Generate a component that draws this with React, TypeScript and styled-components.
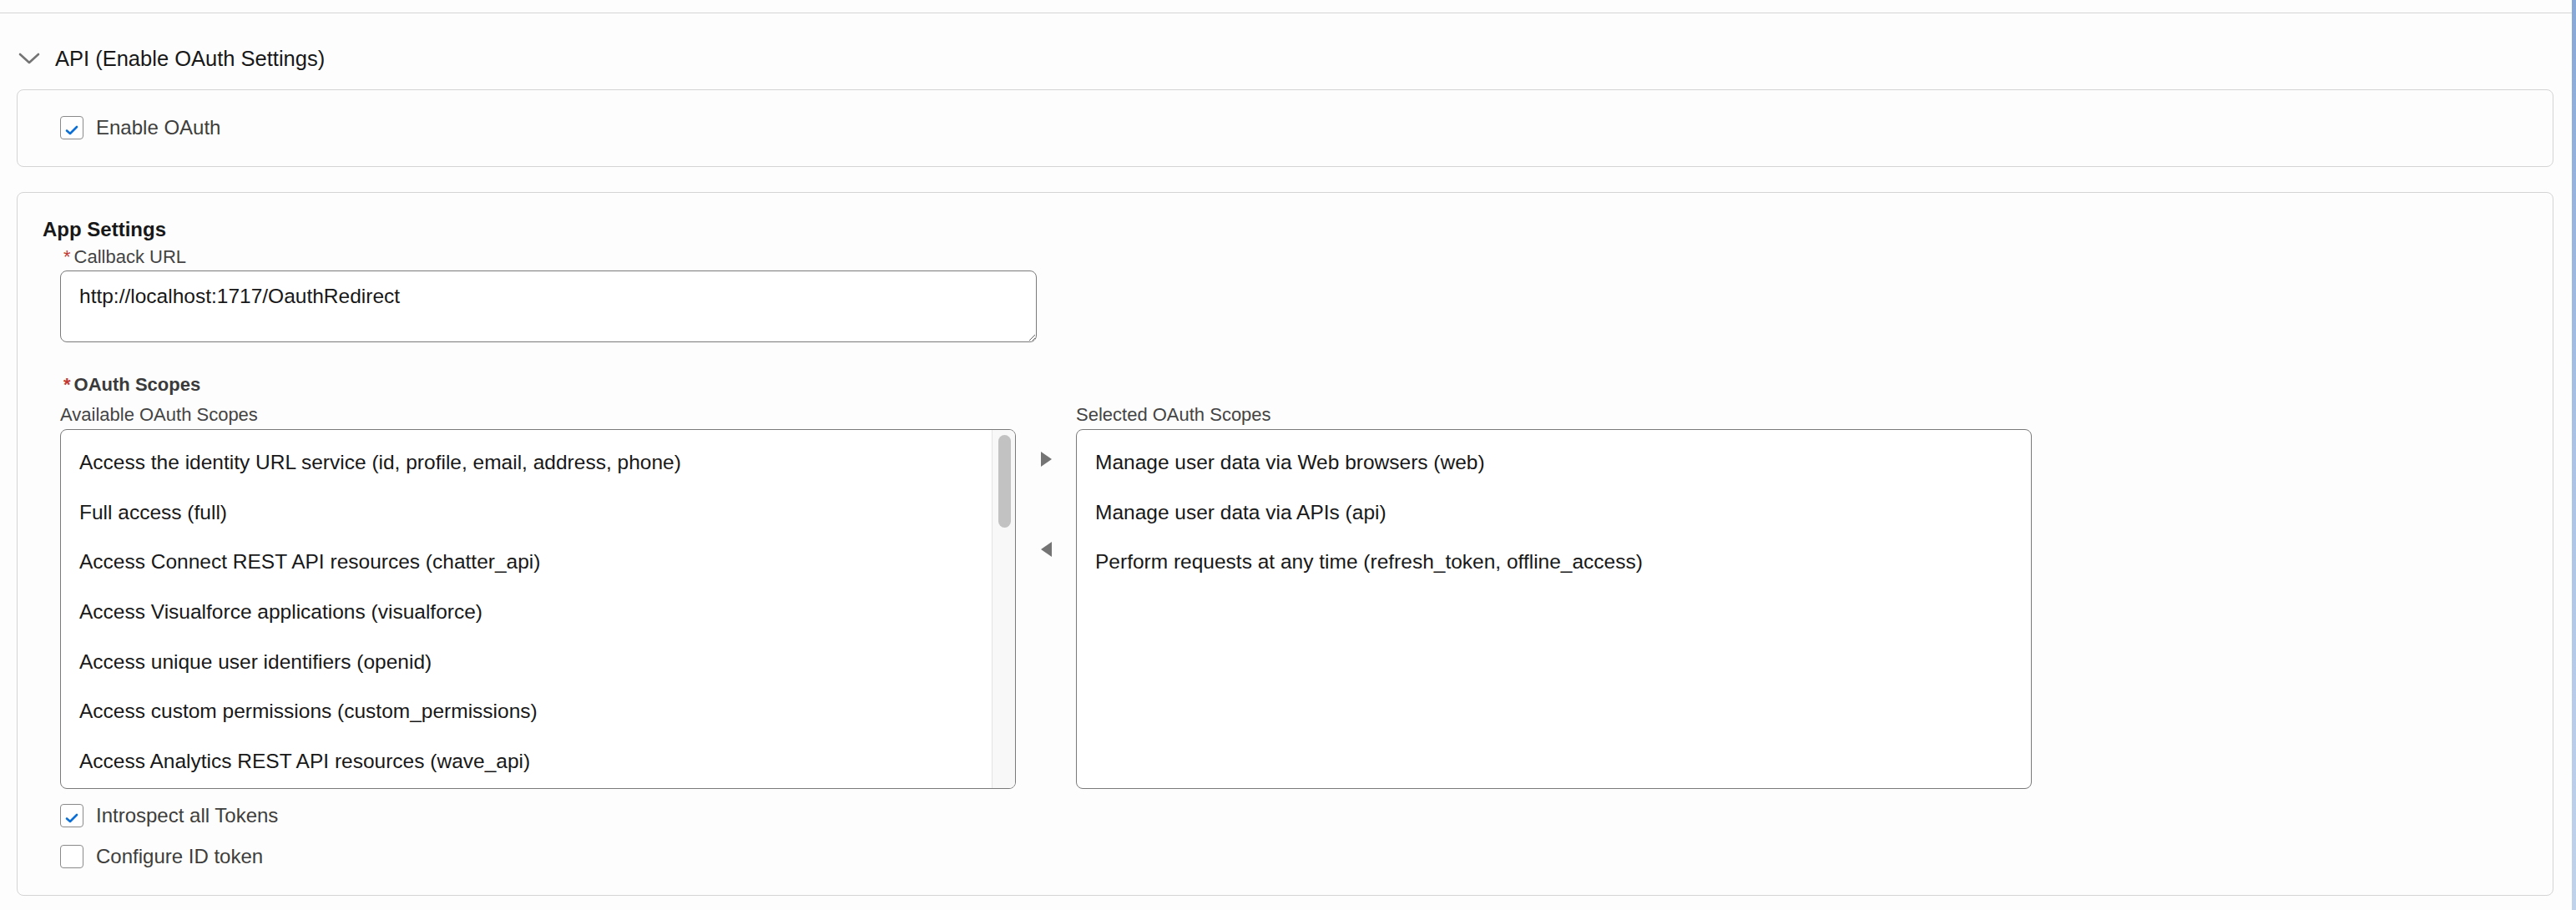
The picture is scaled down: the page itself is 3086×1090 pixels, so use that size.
import { styled, createGlobalStyle } from 'styled-components'

const GlobalStyle = createGlobalStyle`
    body {
        margin: 0;
        background-color: #fdfdfd;
        font-family: 'Liberation Sans', Arial, sans-serif;
        color: #181818;
    }
`

const Page = styled.div`
    display: flex;
    min-height: 100vh;
`

const Main = styled.div`
    flex: 1;
    min-width: 0;
`

const BlueEdge = styled.div`
    width: 5px;
    background: linear-gradient(180deg, #86a8d8 0%, #aac3e6 50%, #c0d3ec 100%);
`

const TopRule = styled.div`
    height: 15px;
    border-bottom: 1px solid #d5d5d5;
`

const SectionHeader = styled.div`
    display: flex;
    align-items: center;
    gap: 18px;
    height: 28px;
    margin-top: 40px;
    padding-left: 22px;
`

const SectionTitle = styled.h2`
    margin: 0;
    font-size: 25.5px;
    font-weight: 400;
    line-height: 28px;
    color: #181818;
`

const Card = styled.div<{ $top: number; $padding: string }>`
    margin: ${(p) => p.$top}px 22px 0 20px;
    padding: ${(p) => p.$padding};
    border: 1px solid #d4d4d4;
    border-radius: 8px;
    background-color: #fdfdfd;
`

const CardTitle = styled.h3`
    margin: 0;
    font-size: 24px;
    font-weight: 700;
    line-height: 30px;
    color: #181818;
`

const Fields = styled.div`
    padding-left: 21px;
`

const Label = styled.div<{ $bold?: boolean; $top: number }>`
    margin-top: ${(p) => p.$top}px;
    font-size: 22px;
    line-height: 26px;
    font-weight: ${(p) => (p.$bold ? 700 : 400)};
    color: ${(p) => (p.$bold ? '#3a3a3a' : '#444444')};
    white-space: nowrap;
`

const Required = styled.abbr`
    text-decoration: none;
    color: #c23934;
    margin: 0 4px 0 4px;
`

const UrlInput = styled.textarea`
    display: block;
    box-sizing: border-box;
    width: 1170px;
    height: 86px;
    margin-top: 3px;
    padding: 15px 22px;
    border: 1px solid #7a7a7a;
    border-radius: 8px;
    background-color: #ffffff;
    font-family: 'Liberation Sans', Arial, sans-serif;
    font-size: 24.5px;
    line-height: 30px;
    color: #181818;
    resize: vertical;
    outline: none;
`

const DualList = styled.div`
    display: flex;
    align-items: flex-start;
    margin-top: 10px;
`

const ListColumn = styled.div`
    width: 1145px;
`

const ListBox = styled.div`
    display: flex;
    box-sizing: border-box;
    height: 431px;
    margin-top: 4px;
    border: 1px solid #7a7a7a;
    border-radius: 8px;
    background-color: #ffffff;
    overflow: hidden;
`

const Options = styled.ul`
    flex: 1;
    margin: 0;
    padding: 9px 0 0 0;
    list-style: none;
`

const Option = styled.li`
    height: 59.7px;
    padding-left: 22px;
    font-size: 24.5px;
    line-height: 59.7px;
    color: #181818;
    white-space: nowrap;
`

const ScrollTrack = styled.div`
    width: 28px;
    box-sizing: border-box;
    padding: 6px 6px 0 7px;
    border-left: 1px solid #e4e4e4;
    background-color: #f8f8f8;
`

const ScrollThumb = styled.div`
    width: 15px;
    height: 111px;
    border-radius: 8px;
    background-color: #c2c2c2;
`

const ArrowColumn = styled.div`
    display: flex;
    flex-direction: column;
    align-items: center;
    gap: 90px;
    width: 72px;
    padding-top: 57px;
`

const ArrowButton = styled.button`
    display: block;
    width: 13px;
    height: 18px;
    padding: 0;
    border: none;
    background: none;
    cursor: pointer;

    svg {
        display: block;
    }
`

const CheckList = styled.div<{ $top: number }>`
    display: flex;
    flex-direction: column;
    gap: 21px;
    margin-top: ${(p) => p.$top}px;
`

const CheckRow = styled.label`
    display: flex;
    align-items: center;
    gap: 15px;
    height: 28px;
    font-size: 24px;
    color: #3e3e3c;
    cursor: pointer;
`

const CheckBox = styled.span`
    display: flex;
    align-items: center;
    justify-content: center;
    box-sizing: border-box;
    width: 28px;
    height: 28px;
    border: 1px solid #8a8a8a;
    border-radius: 4px;
    background-color: #ffffff;
`

const ChevronDown = () => (
    <svg width="26" height="14" viewBox="0 0 26 14" fill="none">
        <path d="M2 2 L13 12 L24 2" stroke="#747474" strokeWidth="2.6" strokeLinecap="round" strokeLinejoin="round" />
    </svg>
)

const CheckMark = () => (
    <svg width="16" height="12" viewBox="0 0 16 12" fill="none" style={{ marginTop: 5 }}>
        <path d="M2 6.5 L6 10 L14 2" stroke="#0b6fd6" strokeWidth="2.6" strokeLinecap="round" strokeLinejoin="round" />
    </svg>
)

const TriangleRight = () => (
    <svg width="13" height="18" viewBox="0 0 13 18">
        <polygon points="0,0 13,9 0,18" fill="#747474" />
    </svg>
)

const TriangleLeft = () => (
    <svg width="13" height="18" viewBox="0 0 13 18">
        <polygon points="13,0 0,9 13,18" fill="#747474" />
    </svg>
)

const Checkbox = ({ checked, label }: { checked: boolean; label: string }) => (
    <CheckRow>
        <CheckBox>{checked ? <CheckMark /> : null}</CheckBox>
        <span>{label}</span>
    </CheckRow>
)

const availableScopes = [
    'Access the identity URL service (id, profile, email, address, phone)',
    'Full access (full)',
    'Access Connect REST API resources (chatter_api)',
    'Access Visualforce applications (visualforce)',
    'Access unique user identifiers (openid)',
    'Access custom permissions (custom_permissions)',
    'Access Analytics REST API resources (wave_api)',
]

const selectedScopes = [
    'Manage user data via Web browsers (web)',
    'Manage user data via APIs (api)',
    'Perform requests at any time (refresh_token, offline_access)',
]

const App = () => {
    return (
        <Page>
            <GlobalStyle />
            <Main>
                <TopRule />
                <SectionHeader>
                    <ChevronDown />
                    <SectionTitle>API (Enable OAuth Settings)</SectionTitle>
                </SectionHeader>

                <Card $top={23} $padding="31px 30px 32px">
                    <Fields>
                        <Checkbox checked label="Enable OAuth" />
                    </Fields>
                </Card>

                <Card $top={30} $padding="29px 30px 32px">
                    <CardTitle>App Settings</CardTitle>
                    <Fields>
                        <Label $top={5}>
                            <Required title="required">*</Required>Callback URL
                        </Label>
                        <UrlInput readOnly defaultValue="http://localhost:1717/OauthRedirect" />

                        <Label $top={38} $bold>
                            <Required title="required">*</Required>OAuth Scopes
                        </Label>
                        <DualList>
                            <ListColumn>
                                <Label $top={0}>Available OAuth Scopes</Label>
                                <ListBox>
                                    <Options>
                                        {availableScopes.map((scope) => (
                                            <Option key={scope}>{scope}</Option>
                                        ))}
                                    </Options>
                                    <ScrollTrack>
                                        <ScrollThumb />
                                    </ScrollTrack>
                                </ListBox>
                            </ListColumn>
                            <ArrowColumn>
                                <ArrowButton title="Add">
                                    <TriangleRight />
                                </ArrowButton>
                                <ArrowButton title="Remove">
                                    <TriangleLeft />
                                </ArrowButton>
                            </ArrowColumn>
                            <ListColumn>
                                <Label $top={0}>Selected OAuth Scopes</Label>
                                <ListBox>
                                    <Options>
                                        {selectedScopes.map((scope) => (
                                            <Option key={scope}>{scope}</Option>
                                        ))}
                                    </Options>
                                </ListBox>
                            </ListColumn>
                        </DualList>

                        <CheckList $top={18}>
                            <Checkbox checked label="Introspect all Tokens" />
                            <Checkbox checked={false} label="Configure ID token" />
                        </CheckList>
                    </Fields>
                </Card>
            </Main>
            <BlueEdge />
        </Page>
    )
}

export default App
